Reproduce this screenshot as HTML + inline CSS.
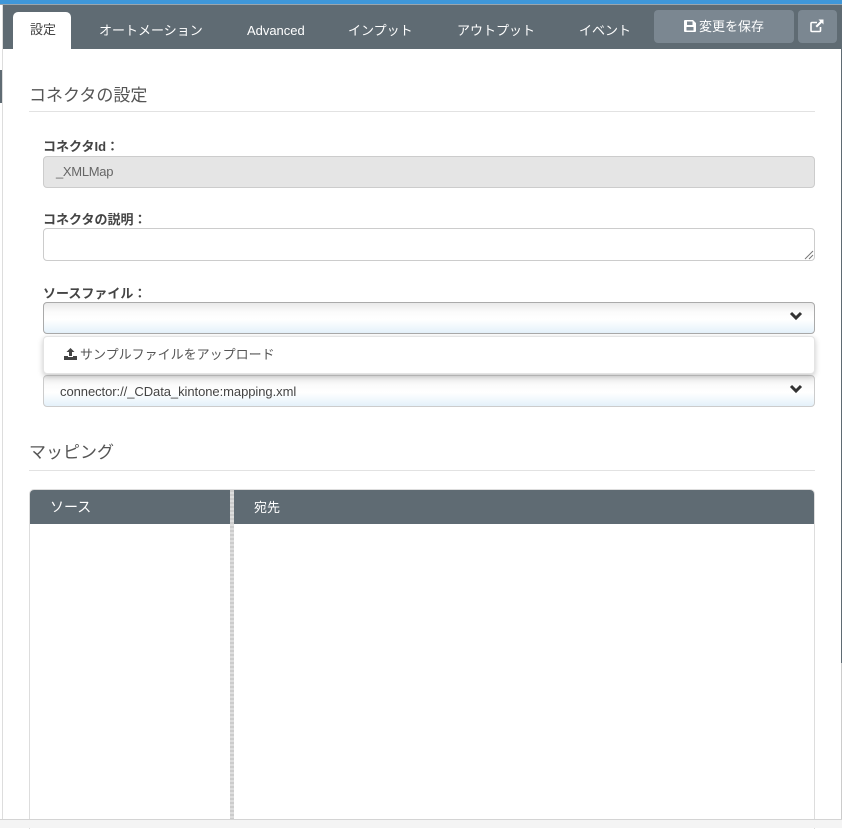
<!DOCTYPE html>
<html lang="ja"><head><meta charset="utf-8"><title>コネクタの設定</title>
<style>
html,body{margin:0;padding:0;background:#fff}
body{width:842px;height:828px;position:relative;overflow:hidden;font-family:"Liberation Sans","Noto Sans CJK JP",sans-serif;font-size:14px;color:#444}
.a{position:absolute;box-sizing:border-box}
.t{position:absolute;white-space:nowrap;line-height:20px}
.tab{color:#fff;font-size:13px;top:21px}
.h{font-size:17px;color:#555;line-height:24px}
.l{font-weight:bold;font-size:13px;color:#444}
.sel{background:linear-gradient(#e9e9e9 0,#fbfbfb 30%,#fff 55%,#e4f1fa 100%);border-radius:4px}
</style></head><body>
<div class="a" style="left:0;top:0;width:842px;height:4px;background:#3f97d9"></div>
<div class="a" style="left:0;top:4px;width:842px;height:1px;background:#9aa5ad"></div>
<div class="a" style="left:2px;top:5px;width:1px;height:815px;background:#ddd"></div>
<div class="a" style="left:0;top:70px;width:2px;height:33px;background:#5f6b73"></div>
<div class="a" style="left:841px;top:5px;width:1px;height:658px;background:#5f6b73"></div>
<div class="a" style="left:841px;top:663px;width:1px;height:157px;background:#ccc"></div>
<div class="a" style="left:3px;top:5px;width:838px;height:44px;background:#5f6b73"></div>
<div class="a" style="left:13px;top:12px;width:58px;height:37px;background:#fff;border-radius:5px 5px 0 0"></div>
<div class="t tab" style="left:30px;color:#444;font-size:13px;top:20px">設定</div>
<div class="t tab" style="left:99px">オートメーション</div>
<div class="t tab" style="left:247px;font-size:13px;letter-spacing:-.02px">Advanced</div>
<div class="t tab" style="left:348px">インプット</div>
<div class="t tab" style="left:457px">アウトプット</div>
<div class="t tab" style="left:579px">イベント</div>
<div class="a" style="left:654px;top:10px;width:140px;height:33px;background:#7b8791;border-radius:4px"></div>
<svg class="a" style="left:684px;top:20px" width="12" height="12" viewBox="0 0 12 12"><path fill="#fff" fill-rule="evenodd" d="M1 0H9L12 3V11A1 1 0 0 1 11 12H1A1 1 0 0 1 0 11V1A1 1 0 0 1 1 0ZM3 1.500V5H8.500V1.500ZM2.500 7V10.500H9.500V7Z"/></svg>
<div class="t" style="left:699px;top:17px;color:#fff;font-size:13px">変更を保存</div>
<div class="a" style="left:798px;top:10px;width:39px;height:33px;background:#7b8791;border-radius:4px"></div>
<svg class="a" style="left:810px;top:19px" width="14" height="14" viewBox="0 0 14 14"><path fill="none" stroke="#fff" stroke-width="1.600" d="M10.500 8V11.500A1 1 0 0 1 9.500 12.500H2A1 1 0 0 1 1 11.500V4.500A1 1 0 0 1 2 3.500H7"/><path fill="#fff" d="M8.500 0.500H13.500V5.500L11.800 3.800 7 8.500 5.500 7 10.200 2.200Z"/></svg>

<div class="t h" style="left:29px;top:84px">コネクタの設定</div>
<div class="a" style="left:29px;top:111px;width:786px;height:1px;background:#e2e2e2"></div>

<div class="t l" style="left:43px;top:137px">コネクタId：</div>
<div class="a" style="left:43px;top:156px;width:772px;height:32px;background:#e5e5e5;border:1px solid #ccc;border-radius:4px"></div>
<div class="t" style="left:56px;top:162px;font-size:13px;color:#666;letter-spacing:-.3px">_XMLMap</div>

<div class="t l" style="left:43px;top:210px">コネクタの説明：</div>
<div class="a" style="left:43px;top:228px;width:772px;height:33px;background:#fff;border:1px solid #ccc;border-radius:4px"></div>
<svg class="a" style="left:804px;top:250px" width="10" height="10" viewBox="0 0 10 10"><path stroke="#777" fill="none" d="M1 9L9 1M5 9L9 5"/></svg>

<div class="t l" style="left:43px;top:284px">ソースファイル：</div>
<div class="a sel" style="left:43px;top:302px;width:772px;height:32px;border:1px solid #aaa"></div>
<svg class="a" style="left:789px;top:311px" width="14" height="10" viewBox="0 0 14 10"><path fill="none" stroke="#333" stroke-width="3" d="M2 2L7 7L12 2"/></svg>

<div class="a sel" style="left:43px;top:375px;width:772px;height:32px;border:1px solid #ccc"></div>
<div class="t" style="left:60px;top:382px;font-size:13px;color:#444;letter-spacing:-.06px">connector://_CData_kintone:mapping.xml</div>
<svg class="a" style="left:789px;top:384px" width="14" height="10" viewBox="0 0 14 10"><path fill="none" stroke="#333" stroke-width="3" d="M2 2L7 7L12 2"/></svg>

<div class="a" style="left:43px;top:336px;width:772px;height:38px;background:#fff;border:1px solid #e4e4e4;border-radius:4px;box-shadow:0 2px 6px rgba(0,0,0,.22)"></div>
<svg class="a" style="left:64px;top:348px" width="13" height="12" viewBox="0 0 13 12"><path fill="#444" d="M6.500 0L10.500 4H8V8H5V4H2.500ZM0 8H4V9H9V8H13V12H0Z"/></svg>
<div class="t" style="left:80px;top:345px;color:#555;font-size:13px">サンプルファイルをアップロード</div>

<div class="t h" style="left:29px;top:441px">マッピング</div>
<div class="a" style="left:29px;top:470px;width:786px;height:1px;background:#e2e2e2"></div>

<div class="a" style="left:29px;top:489px;width:786px;height:340px;border:1px solid #ddd;border-bottom:0;border-radius:5px 5px 0 0;background:#fff"></div>
<div class="a" style="left:30px;top:490px;width:784px;height:34px;background:#5f6b73;border-radius:4px 4px 0 0"></div>
<div class="a" style="left:230px;top:490px;width:4px;height:330px;background:repeating-linear-gradient(#ccc 0,#ccc 2px,#ddd 2px,#ddd 4px)"></div>
<div class="t" style="left:50px;top:497px;color:#fff;font-size:14px">ソース</div>
<div class="t" style="left:254px;top:498px;color:#fff;font-size:13px">宛先</div>

<div class="a" style="left:0;top:819px;width:842px;height:9px;background:#f4f4f4;border-top:1px solid #d4d4d4"></div>
</body></html>
